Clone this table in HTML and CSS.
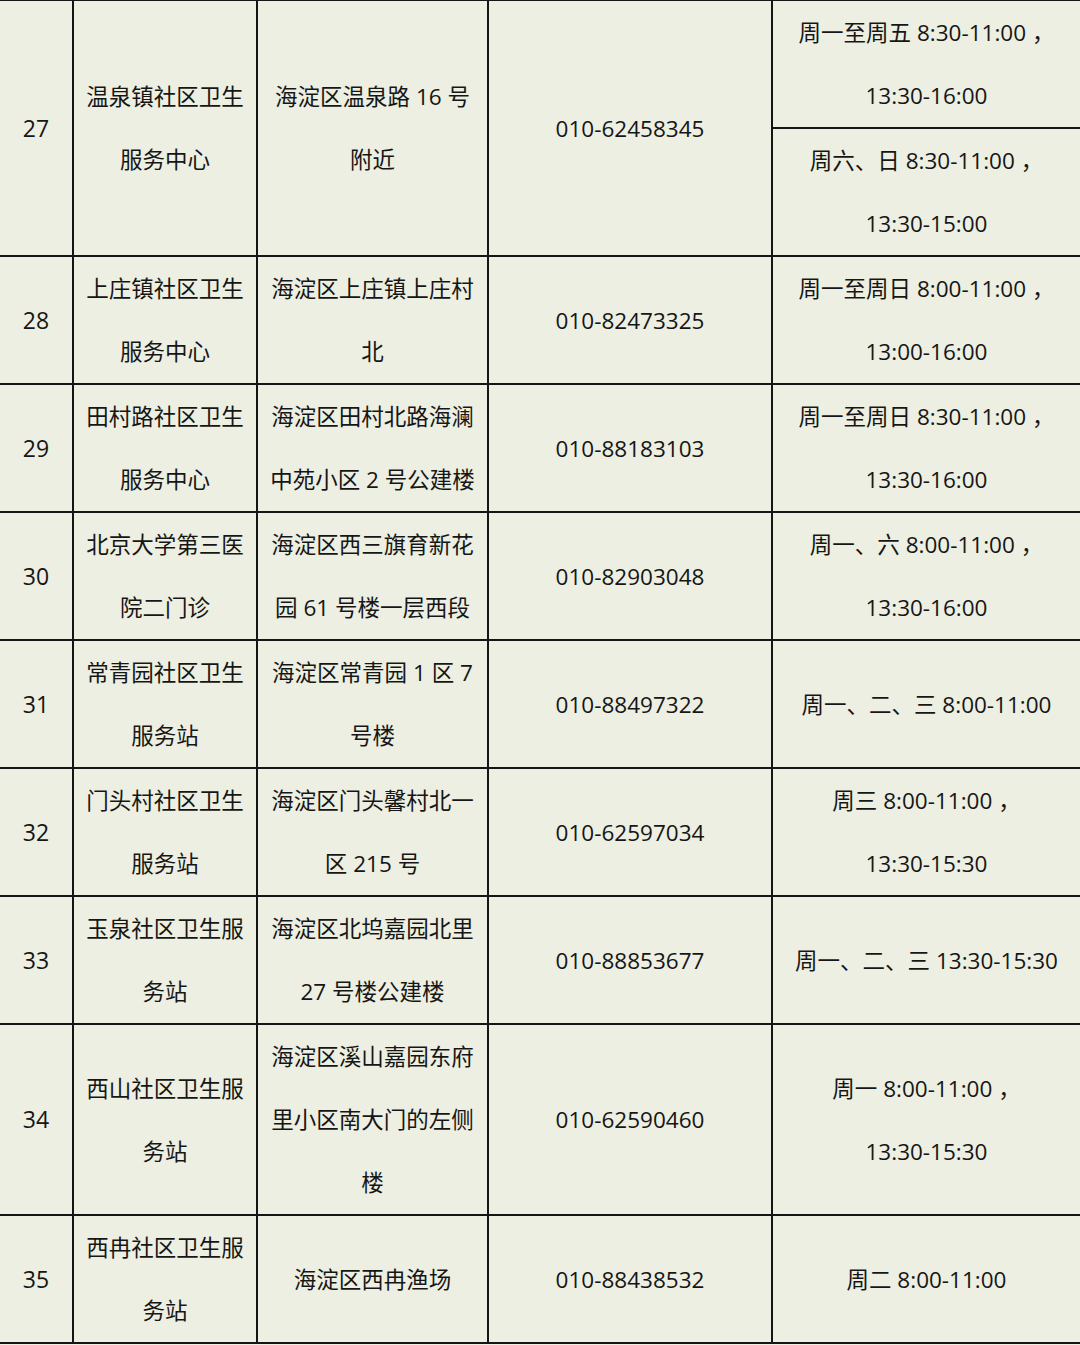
FILE: index.html
```html
<!DOCTYPE html>
<html lang="zh-CN">
<head>
<meta charset="utf-8">
<title>海淀区社区卫生服务中心</title>
<link rel="stylesheet" href="styles.css">
</head>
<body>
<table class="list">
<colgroup>
<col class="c-no"><col class="c-name"><col class="c-addr"><col class="c-tel"><col class="c-time">
</colgroup>
<tbody>
<tr class="row">
<td class="no" rowspan="2">27</td>
<td rowspan="2">温泉镇社区卫生<br>服务中心</td>
<td rowspan="2">海淀区温泉路 16 号<br>附近</td>
<td rowspan="2">010-62458345</td>
<td>周一至周五 8:30-11:00 ，<br>13:30-16:00</td>
</tr>
<tr class="row">
<td>周六、日 8:30-11:00 ，<br>13:30-15:00</td>
</tr>
<tr class="row">
<td class="no">28</td>
<td>上庄镇社区卫生<br>服务中心</td>
<td>海淀区上庄镇上庄村<br>北</td>
<td>010-82473325</td>
<td>周一至周日 8:00-11:00 ，<br>13:00-16:00</td>
</tr>
<tr class="row">
<td class="no">29</td>
<td>田村路社区卫生<br>服务中心</td>
<td>海淀区田村北路海澜<br>中苑小区 2 号公建楼</td>
<td>010-88183103</td>
<td>周一至周日 8:30-11:00 ，<br>13:30-16:00</td>
</tr>
<tr class="row">
<td class="no">30</td>
<td>北京大学第三医<br>院二门诊</td>
<td>海淀区西三旗育新花<br>园 61 号楼一层西段</td>
<td>010-82903048</td>
<td>周一、六 8:00-11:00 ，<br>13:30-16:00</td>
</tr>
<tr class="row">
<td class="no">31</td>
<td>常青园社区卫生<br>服务站</td>
<td>海淀区常青园 1 区 7<br>号楼</td>
<td>010-88497322</td>
<td>周一、二、三 8:00-11:00</td>
</tr>
<tr class="row">
<td class="no">32</td>
<td>门头村社区卫生<br>服务站</td>
<td>海淀区门头馨村北一<br>区 215 号</td>
<td>010-62597034</td>
<td>周三 8:00-11:00 ，<br>13:30-15:30</td>
</tr>
<tr class="row">
<td class="no">33</td>
<td>玉泉社区卫生服<br>务站</td>
<td>海淀区北坞嘉园北里<br>27 号楼公建楼</td>
<td>010-88853677</td>
<td>周一、二、三 13:30-15:30</td>
</tr>
<tr class="row tall">
<td class="no">34</td>
<td>西山社区卫生服<br>务站</td>
<td>海淀区溪山嘉园东府<br>里小区南大门的左侧<br>楼</td>
<td>010-62590460</td>
<td>周一 8:00-11:00 ，<br>13:30-15:30</td>
</tr>
<tr class="row">
<td class="no">35</td>
<td>西冉社区卫生服<br>务站</td>
<td>海淀区西冉渔场</td>
<td>010-88438532</td>
<td>周二 8:00-11:00</td>
</tr>
</tbody>
</table>
</body>
</html>
```

FILE: styles.css
```css
html, body {
  margin: 0;
  padding: 0;
  background: #ecefe1;
}
body {
  width: 1080px;
  height: 1345px;
  overflow: hidden;
}
.list {
  border-collapse: collapse;
  table-layout: fixed;
  width: 1082px;
  margin-top: -1px;
  margin-left: -2px;
  font-family: "Open Sans", "Noto Sans CJK SC", sans-serif;
  font-size: 22.5px;
  color: #161616;
}
.c-no { width: 74px; }
.c-name { width: 184px; }
.c-addr { width: 231px; }
.c-tel { width: 284px; }
.c-time { width: 309px; }
.list td {
  border: 2px solid #151515;
  padding: 0;
  text-align: center;
  vertical-align: middle;
  line-height: 63px;
  white-space: nowrap;
}
.row { height: 126px; }
.row.tall { height: 190px; }
.no { font-size: 23px; }
```
